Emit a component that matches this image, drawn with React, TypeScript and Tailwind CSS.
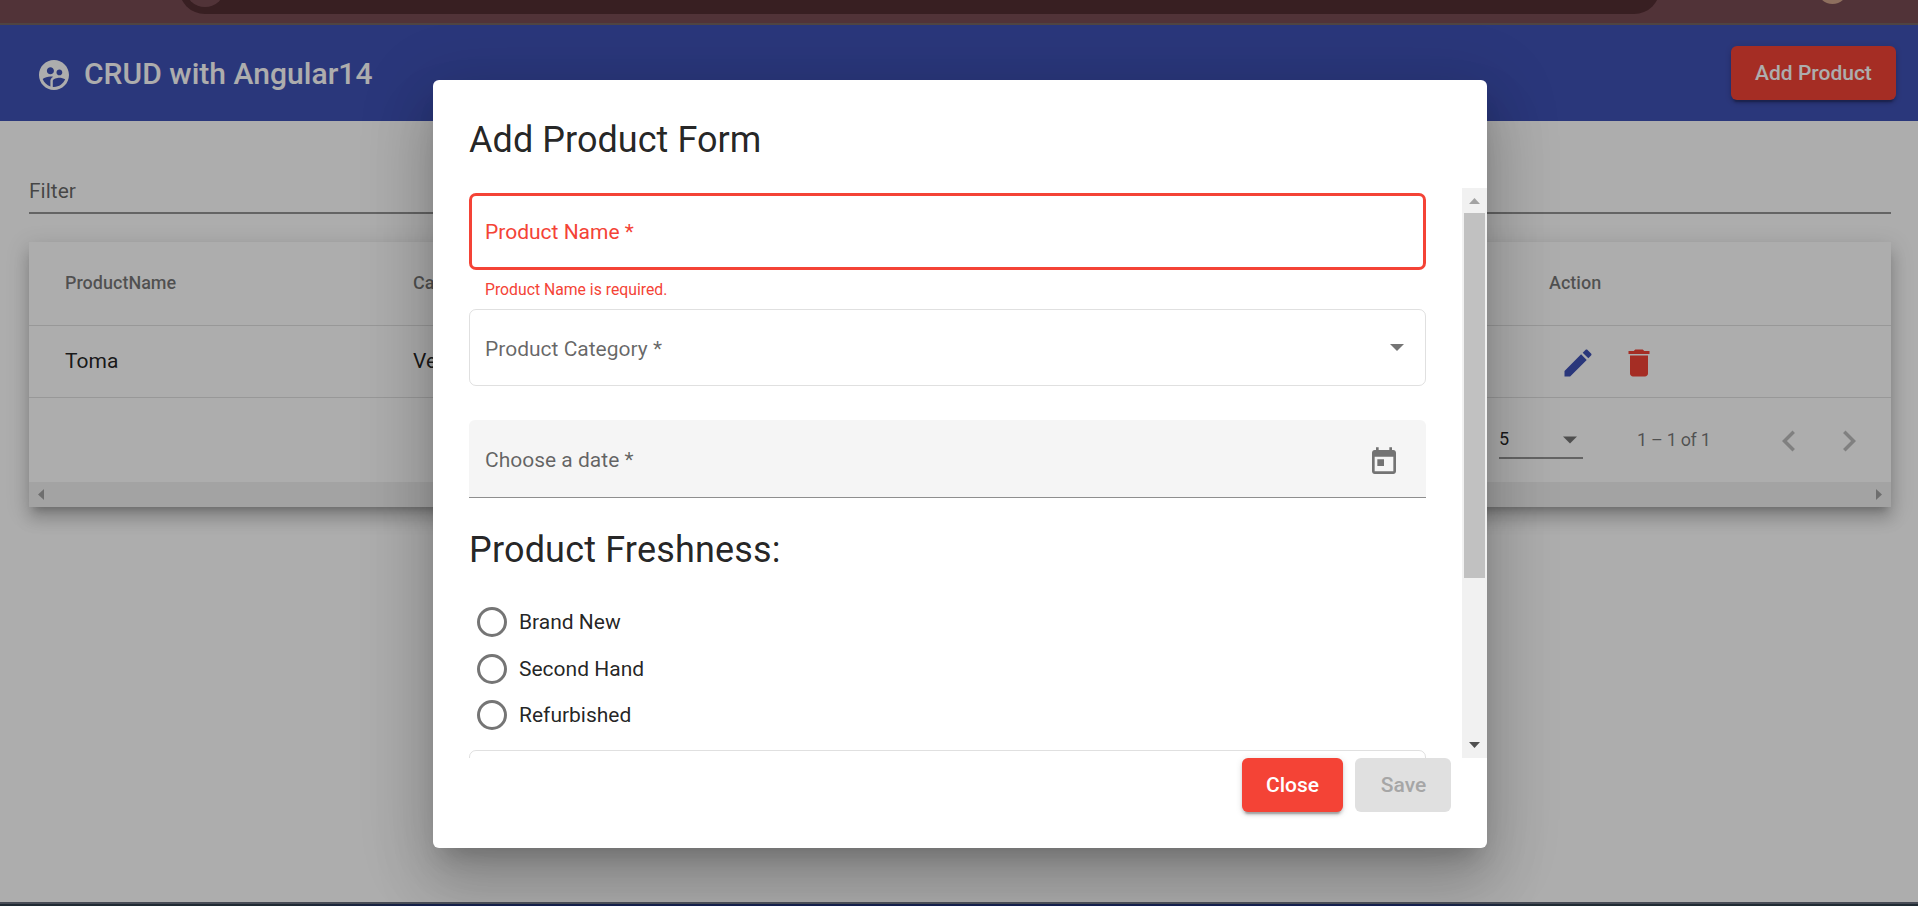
import React from "react";

function Icon({ d, className }: { d: string; className: string }) {
  return (
    <svg viewBox="0 0 24 24" fill="currentColor" className={className} aria-hidden="true">
      <path d={d} />
    </svg>
  );
}

const SUPERVISED =
  "M11.99 2c-5.52 0-10 4.48-10 10s4.48 10 10 10 10-4.48 10-10-4.48-10-10-10zm3.61 6.34c1.07 0 1.93.86 1.93 1.93 0 1.07-.86 1.93-1.93 1.93-1.07 0-1.93-.86-1.93-1.93-.01-1.07.86-1.93 1.93-1.93zm-6-1.58c1.3 0 2.36 1.06 2.36 2.36 0 1.3-1.06 2.36-2.36 2.36s-2.36-1.06-2.36-2.36c0-1.31 1.05-2.36 2.36-2.36zm0 9.13v3.75c-2.4-.75-4.3-2.6-5.14-4.96 1.05-1.12 3.67-1.69 5.14-1.69.53 0 1.2.08 1.9.22-1.64.87-1.9 2.02-1.9 2.68zM11.99 20c-.27 0-.53-.01-.79-.04v-4.07c0-1.42 2.94-2.13 4.4-2.13 1.07 0 2.92.39 3.84 1.15-1.17 2.97-4.06 5.09-7.45 5.09z";
const EDIT =
  "M3 17.25V21h3.75L17.81 9.94l-3.75-3.75L3 17.25zM20.71 7.04c.39-.39.39-1.02 0-1.41l-2.34-2.34c-.39-.39-1.02-.39-1.41 0l-1.83 1.83 3.75 3.75 1.83-1.83z";
const DELETE = "M6 19c0 1.1.9 2 2 2h8c1.1 0 2-.9 2-2V7H6v12zM19 4h-3.5l-1-1h-5l-1 1H5v2h14V4z";
const PREV = "M15.41 7.41L14 6l-6 6 6 6 1.41-1.41L10.83 12z";
const NEXT = "M10 6L8.59 7.41 13.17 12l-4.58 4.59L10 18l6-6z";
const TODAY =
  "M19 3h-1V1h-2v2H8V1H6v2H5c-1.11 0-1.99.9-1.99 2L3 19c0 1.1.89 2 2 2h14c1.1 0 2-.9 2-2V5c0-1.1-.9-2-2-2zm0 16H5V8h14v11zM7 10h5v5H7z";

function Triangle({ points, className }: { points: string; className: string }) {
  return (
    <svg viewBox="0 0 24 24" fill="currentColor" className={className} aria-hidden="true">
      <polygon points={points} />
    </svg>
  );
}

function BrowserStrip() {
  return (
    <div className="relative h-[25px] shrink-0 overflow-hidden border-b-2 border-[#4f4442] bg-[#513338]">
      <div className="absolute top-[-38px] left-[179px] h-[52px] w-[1481px] rounded-full bg-[#381f22]" />
      <div className="absolute top-[-33px] left-[185px] size-10 rounded-full bg-[#513338]" />
      <div className="absolute top-[-27px] left-[1817px] size-[31px] rounded-full bg-[#8e6f5e]" />
    </div>
  );
}

function Toolbar() {
  return (
    <header className="flex h-24 items-center justify-between bg-[#3f51b5] pr-[22px] pl-9 text-white">
      <div className="flex items-center">
        <Icon d={SUPERVISED} className="mt-[4px] size-9" />
        <h1 className="mt-[2px] ml-3 text-[30px] leading-[48px] font-medium tracking-[0.04px]">CRUD with Angular14</h1>
      </div>
      <button className="h-[54px] w-[165px] rounded-md bg-[#f44336] pt-[2px] text-[21px] font-medium shadow-[0_4.5px_1.5px_-3px_rgba(0,0,0,.2),0_3px_3px_0_rgba(0,0,0,.14),0_1.5px_7.5px_0_rgba(0,0,0,.12)]">
        Add Product
      </button>
    </header>
  );
}

function ProductTable() {
  return (
    <section className="mt-7 mr-[27px] ml-[29px] bg-white shadow-[0_7.5px_7.5px_-4.5px_rgba(0,0,0,.2),0_12px_15px_1.5px_rgba(0,0,0,.14),0_4.5px_21px_3px_rgba(0,0,0,.12)]">
      <div className="grid h-21 grid-cols-[348px_1136px_1fr] items-center border-b border-black/12 pb-[2px] pl-9 text-[18px] font-medium text-black/54">
        <span>ProductName</span>
        <span>Ca</span>
        <span>Action</span>
      </div>
      <div className="grid h-18 grid-cols-[348px_1147px_1fr] items-center border-b border-black/12 pl-9 text-[21px] text-black/87">
        <span>Toma</span>
        <span>Ve</span>
        <span className="flex items-center gap-[25px] pt-[3px]">
          <Icon d={EDIT} className="size-9 text-[#3f51b5]" />
          <Icon d={DELETE} className="size-9 text-[#f44336]" />
        </span>
      </div>
      <div className="flex h-21 items-center justify-end pr-[21px] text-[18px] text-black/54">
        <div className="mr-[54px] flex h-[38px] w-21 items-start justify-between border-b-2 border-black/42 pr-[6px]">
          <span className="mt-1 leading-[28px] text-black/87">5</span>
          <Triangle points="0,6 24,6 12,18" className="mt-3 w-[14px] text-black/54" />
        </div>
        <span className="mr-[58px] w-[73px] pb-[2px] tracking-[-0.3px] whitespace-nowrap">1 – 1 of 1</span>
        <Icon d={PREV} className="mt-[2px] mr-[18px] size-[42px] text-black/26" />
        <Icon d={NEXT} className="mt-[2px] size-[42px] text-black/26" />
      </div>
      <div className="flex h-[25px] items-center justify-between bg-[#f1f1f1] px-[9px] text-[#a3a3a3]">
        <svg viewBox="0 0 6 11" className="h-[11px] w-[6px]" fill="currentColor"><polygon points="6,0 6,11 0,5.5" /></svg>
        <svg viewBox="0 0 6 11" className="h-[11px] w-[6px]" fill="currentColor"><polygon points="0,0 0,11 6,5.5" /></svg>
      </div>
    </section>
  );
}

function Scrollbar() {
  return (
    <div className="flex w-[25px] shrink-0 flex-col items-center justify-between bg-[#f1f1f1] pb-[10px]">
      <div className="flex flex-col items-center">
        <svg viewBox="0 0 11 6" className="mt-[10px] mb-[9px] h-[6px] w-[11px]" fill="#a3a3a3"><polygon points="0,6 11,6 5.5,0" /></svg>
        <div className="h-[365px] w-[21px] bg-[#c1c1c1]" />
      </div>
      <svg viewBox="0 0 11 6" className="h-[6px] w-[11px]" fill="#505050"><polygon points="0,0 11,0 5.5,6" /></svg>
    </div>
  );
}

const FRESHNESS = [
  { label: "Brand New", gap: "mb-[17px]" },
  { label: "Second Hand", gap: "mb-4" },
  { label: "Refurbished", gap: "mb-5" },
];

function ProductDialog() {
  return (
    <div
      role="dialog"
      className="mt-[55px] ml-[433px] flex h-[768px] w-[1054px] flex-col rounded-md bg-white text-[21px] text-black/87 shadow-[0_16.5px_22.5px_-10.5px_rgba(0,0,0,.2),0_36px_57px_4.5px_rgba(0,0,0,.14),0_13.5px_69px_12px_rgba(0,0,0,.12)]"
    >
      <h2 className="h-[108px] shrink-0 pt-9 pl-9 text-[36px] leading-[48px] tracking-[0.05px]">Add Product Form</h2>
      <div className="flex h-[570px] shrink-0">
        <form className="flex flex-1 flex-col overflow-hidden pt-[5px] pr-9 pl-9">
          <div className="flex h-[77px] shrink-0 items-center rounded-[7px] border-3 border-[#f44336] pt-[2px] pl-[13px] text-[#f44336]">
            Product Name *
          </div>
          <p className="h-[39px] shrink-0 pt-[11px] pl-4 text-[15.75px] leading-[18px] text-[#f44336]">
            Product Name is required.
          </p>
          <div className="flex h-[77px] shrink-0 items-center justify-between rounded-[7px] border border-black/12 pr-[21px] pl-[15px] text-black/60">
            <span className="pt-[5px]">Product Category *</span>
            <svg viewBox="0 0 14 7" className="h-[7px] w-[14px]" fill="#757575"><polygon points="0,0 14,0 7,7" /></svg>
          </div>
          <div className="mt-[34px] flex h-[78px] shrink-0 items-center justify-between rounded-t-[6px] border-b border-black/42 bg-[#f5f5f5] pr-[26px] pl-4 text-black/60">
            <span className="pt-[5px]">Choose a date *</span>
            <Icon d={TODAY} className="mt-[6px] size-8 text-[#737373]" />
          </div>
          <h2 className="mt-7 mb-[33px] shrink-0 text-[36px] leading-[48px] tracking-[0.18px]">Product Freshness:</h2>
          {FRESHNESS.map((option) => (
            <label key={option.label} className={`flex h-[30px] shrink-0 items-center gap-3 pl-2 ${option.gap}`}>
              <span className="size-[30px] rounded-full border-3 border-[#757575]" />
              <span className="pt-[2px]">{option.label}</span>
            </label>
          ))}
          <div className="h-[77px] shrink-0 rounded-[7px] border border-black/12" />
        </form>
        <Scrollbar />
      </div>
      <div className="flex justify-end gap-3 pr-9 font-medium">
        <button className="h-[54px] w-[101px] rounded-md bg-[#f44336] pt-[2px] text-white shadow-[0_4.5px_1.5px_-3px_rgba(0,0,0,.2),0_3px_3px_0_rgba(0,0,0,.14),0_1.5px_7.5px_0_rgba(0,0,0,.12)]">
          Close
        </button>
        <button disabled className="h-[54px] w-24 rounded-md bg-[#e0e0e0] pt-[2px] pl-[1px] text-[#a6a6a6]">
          Save
        </button>
      </div>
    </div>
  );
}

export default function App() {
  return (
    <div className="flex h-[906px] w-[1918px] flex-col overflow-hidden font-['Roboto',sans-serif]">
      <BrowserStrip />
      <main className="relative h-[877px] shrink-0 overflow-hidden bg-white">
        <Toolbar />
        <div className="mr-[27px] ml-[29px] h-[93px] border-b-2 border-black/42 pt-[58px] text-[21px] leading-[24px] text-black/60">
          Filter
        </div>
        <ProductTable />
        <div className="absolute inset-0 bg-black/32">
          <ProductDialog />
        </div>
      </main>
      <footer className="h-1 shrink-0 border-t-2 border-[#474b55] bg-[linear-gradient(90deg,#202a33_0%,#202a33_15%,#14204a_22%,#14204f_74%,#202b33_80%)]" />
    </div>
  );
}
